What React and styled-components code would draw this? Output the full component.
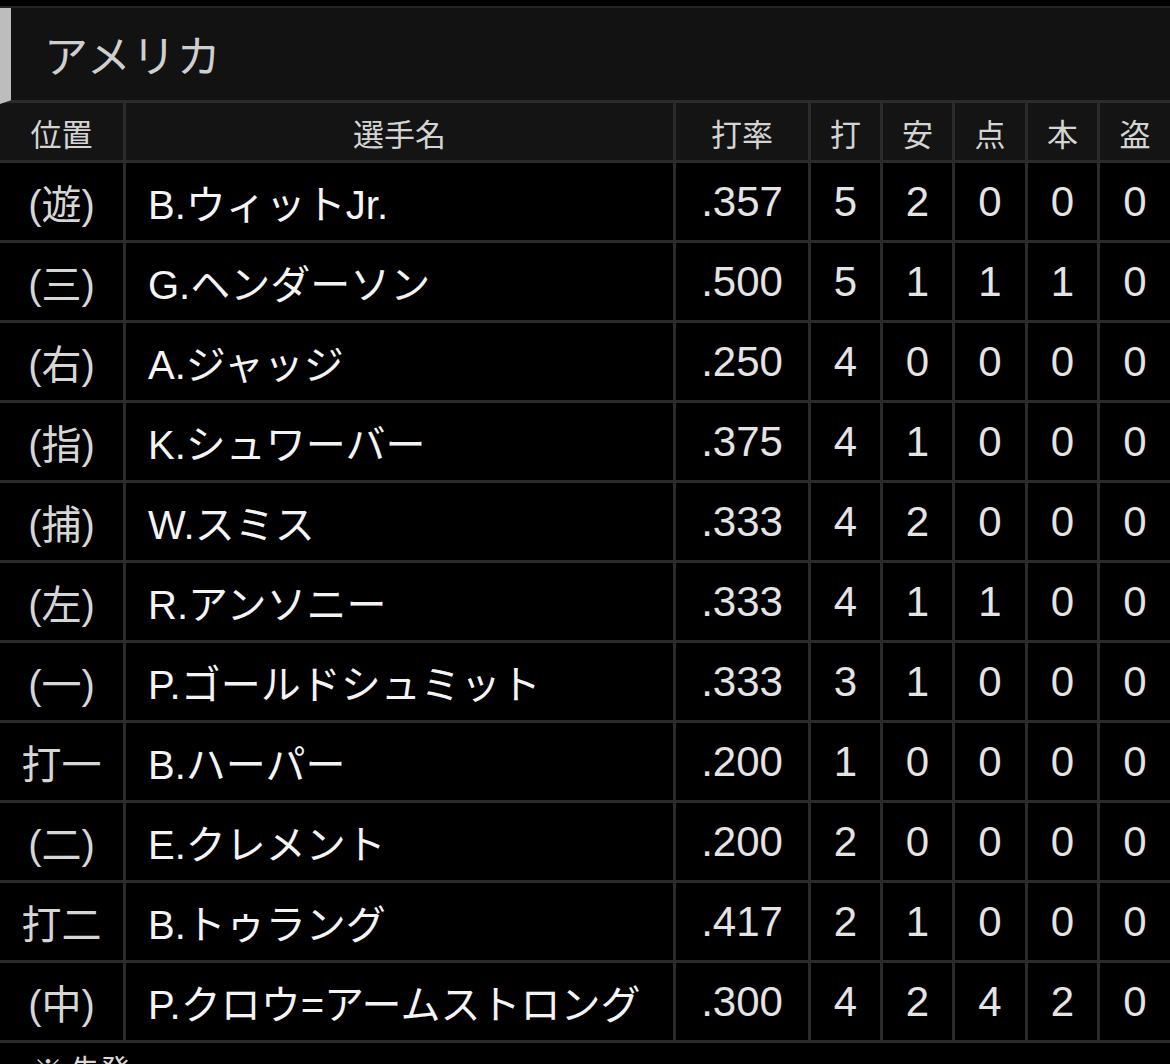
import React from 'react';
import styled, { createGlobalStyle } from 'styled-components';

const GlobalStyle = createGlobalStyle`
  html, body {
    margin: 0;
    padding: 0;
    background: #000;
  }
  body {
    font-family: 'Liberation Sans', 'Noto Sans CJK JP', sans-serif;
    -webkit-font-smoothing: antialiased;
  }
`

const players = [
  { pos: '(遊)', name: 'B.ウィットJr.', avg: '.357', ab: 5, h: 2, rbi: 0, hr: 0, sb: 0 },
  { pos: '(三)', name: 'G.ヘンダーソン', avg: '.500', ab: 5, h: 1, rbi: 1, hr: 1, sb: 0 },
  { pos: '(右)', name: 'A.ジャッジ', avg: '.250', ab: 4, h: 0, rbi: 0, hr: 0, sb: 0 },
  { pos: '(指)', name: 'K.シュワーバー', avg: '.375', ab: 4, h: 1, rbi: 0, hr: 0, sb: 0 },
  { pos: '(捕)', name: 'W.スミス', avg: '.333', ab: 4, h: 2, rbi: 0, hr: 0, sb: 0 },
  { pos: '(左)', name: 'R.アンソニー', avg: '.333', ab: 4, h: 1, rbi: 1, hr: 0, sb: 0 },
  { pos: '(一)', name: 'P.ゴールドシュミット', avg: '.333', ab: 3, h: 1, rbi: 0, hr: 0, sb: 0 },
  { pos: '打一', name: 'B.ハーパー', avg: '.200', ab: 1, h: 0, rbi: 0, hr: 0, sb: 0 },
  { pos: '(二)', name: 'E.クレメント', avg: '.200', ab: 2, h: 0, rbi: 0, hr: 0, sb: 0 },
  { pos: '打二', name: 'B.トゥラング', avg: '.417', ab: 2, h: 1, rbi: 0, hr: 0, sb: 0 },
  { pos: '(中)', name: 'P.クロウ=アームストロング', avg: '.300', ab: 4, h: 2, rbi: 4, hr: 2, sb: 0 },
]

const headers = ['位置', '選手名', '打率', '打', '安', '点', '本', '盗']

function App() {
  return (
    <Page>
      <GlobalStyle />
      <TitleBar>
        <Accent />
        <Title>アメリカ</Title>
      </TitleBar>
      <Table>
        {headers.map((h) => (
          <HeadCell key={h}>{h}</HeadCell>
        ))}
        {players.map((p) => (
          <React.Fragment key={p.name}>
            <PosCell>{p.pos}</PosCell>
            <NameCell>{p.name}</NameCell>
            <NumCell>{p.avg}</NumCell>
            <NumCell>{p.ab}</NumCell>
            <NumCell>{p.h}</NumCell>
            <NumCell>{p.rbi}</NumCell>
            <NumCell>{p.hr}</NumCell>
            <NumCell>{p.sb}</NumCell>
          </React.Fragment>
        ))}
      </Table>
      <Note>※ 先発</Note>
    </Page>
  )
}

export default App

const Page = styled.div`
    width: 1170px;
    height: 1064px;
    overflow: hidden;
    padding-top: 6px;
    box-sizing: border-box;
    background: #000;
`

const TitleBar = styled.div`
    height: 92px;
    border-top: 2px solid #262626;
    background: #121212;
    display: flex;
    align-items: stretch;
`

const Accent = styled.div`
    width: 11px;
    background: #bdbdbd;
    clip-path: polygon(0 0, 100% 0, 100% 96%, 0 100%);
    margin-bottom: -4px;
    position: relative;
    z-index: 1;
`

const Title = styled.h1`
    margin: 0;
    padding-left: 33px;
    display: flex;
    align-items: center;
    font-family: 'Noto Sans CJK JP', sans-serif;
    font-weight: 400;
    font-size: 44px;
    letter-spacing: 1px;
    color: #cfcfcf;
`

const Table = styled.div`
    display: grid;
    grid-template-columns: 123px 547px 132px 69px 69px 70px 69px 70px;
    grid-template-rows: 57px;
    grid-auto-rows: 77px;
    gap: 3px;
    padding: 3px 0;
    background: #2b2b2b;
`

const Cell = styled.div`
    display: flex;
    align-items: center;
    justify-content: center;
    background: #000;
    white-space: nowrap;
    overflow: hidden;
`

const HeadCell = styled(Cell)`
    background: #141414;
    font-family: 'Noto Sans CJK JP', sans-serif;
    font-size: 31px;
    color: #d4d4d4;
    padding-top: 2px;
`

const PosCell = styled(Cell)`
    font-family: 'Liberation Sans', 'Noto Sans CJK JP', sans-serif;
    font-size: 40px;
    color: #d6d6d6;
`

const NameCell = styled(Cell)`
    justify-content: flex-start;
    padding-left: 22px;
    font-family: 'Liberation Sans', 'Noto Sans CJK JP', sans-serif;
    font-size: 40px;
    color: #f4f4f4;
`

const NumCell = styled(Cell)`
    font-size: 42px;
    color: #e4e4e4;
`

const Note = styled.div`
    padding: 4px 0 0 33px;
    font-family: 'Noto Sans CJK JP', sans-serif;
    font-size: 30px;
    line-height: 1.4;
    color: #d8d8d8;
`
